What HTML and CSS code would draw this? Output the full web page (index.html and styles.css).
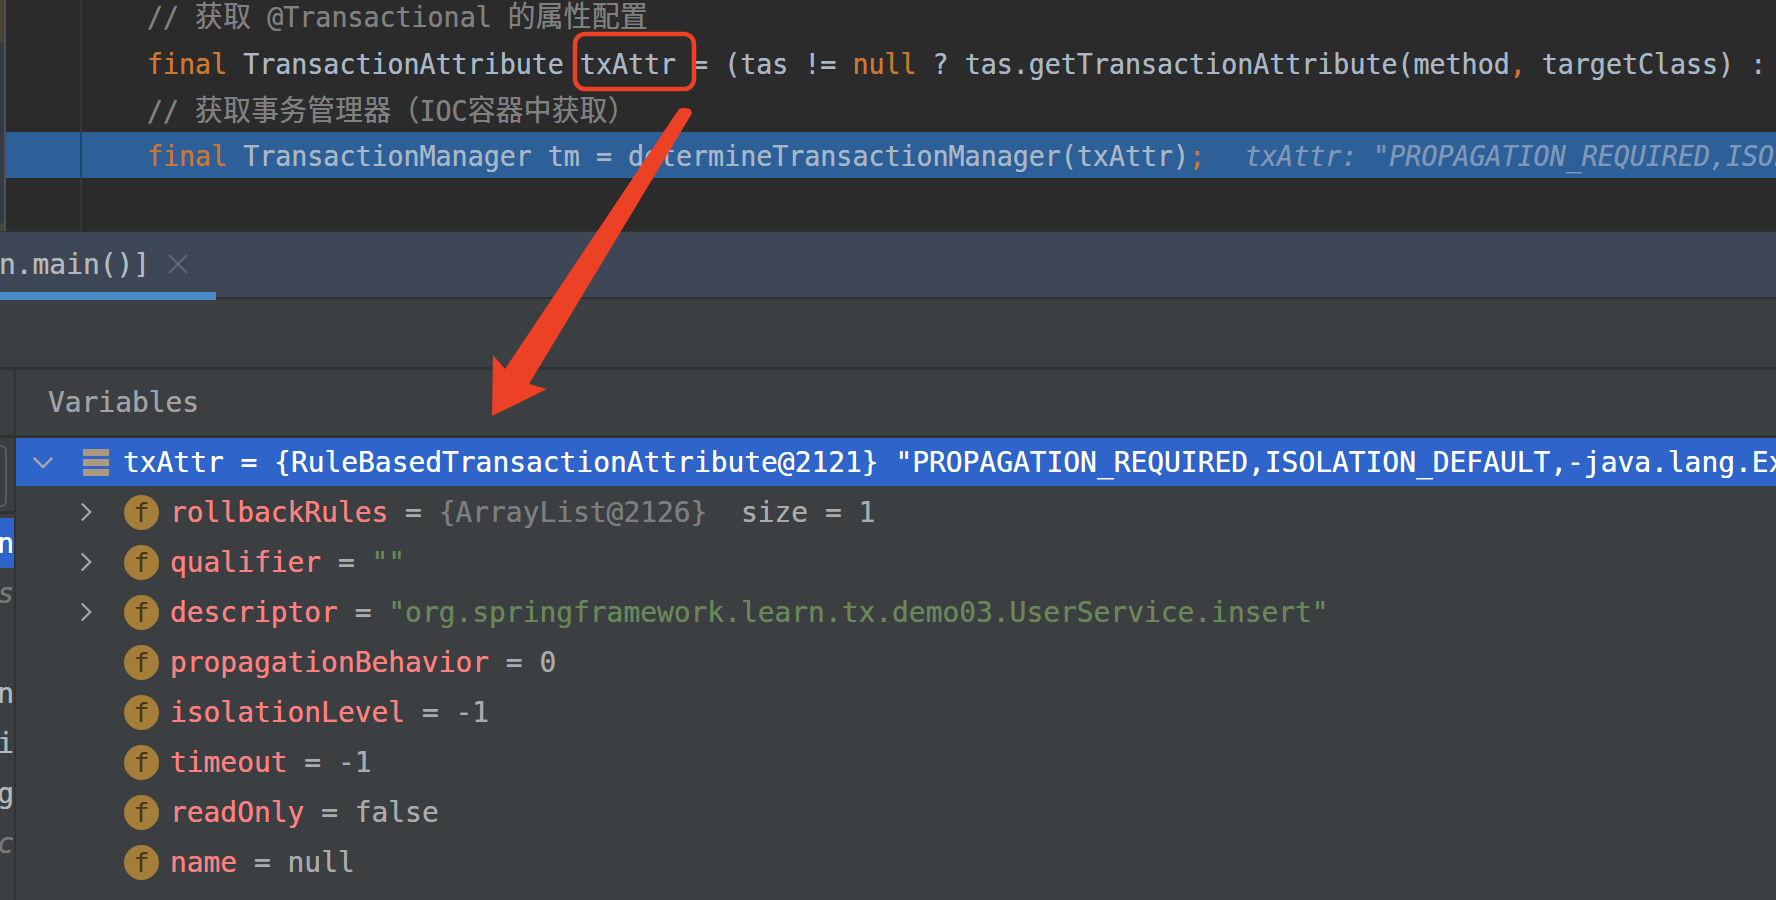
FILE: index.html
```html
<!DOCTYPE html>
<html lang="zh">
<head>
<meta charset="utf-8">
<title>Debugger</title>
<link rel="stylesheet" href="styles.css">
</head>
<body>
<section class="editor">
  <div class="edge"><i class="edge-top"></i><i class="edge-bottom"></i></div>
  <div class="code-wrap">
    <div class="line"><div class="gutter"></div><div class="code"><span class="cm">// <span class="cjk">获取</span> @Transactional <span class="cjk">的属性配置</span></span></div></div>
    <div class="line"><div class="gutter"></div><div class="code"><span class="kw">final</span> TransactionAttribute txAttr = (tas != <span class="kw">null</span> ? tas.getTransactionAttribute(method<span class="kw">,</span> targetClass) : <span class="kw">null</span>);</div></div>
    <div class="line"><div class="gutter"></div><div class="code"><span class="cm">// <span class="cjk">获取事务管理器（</span>IOC<span class="cjk">容器中获取）</span></span></div></div>
    <div class="line current"><div class="gutter"></div><div class="code"><span class="kw">final</span> TransactionManager tm = determineTransactionManager(txAttr)<span class="kw">;</span><span class="hint">txAttr: "PROPAGATION_REQUIRED,ISOLATION_DEFAULT,-java.lang.Exception"</span></div></div>
    <div class="line"><div class="gutter"></div></div>
    <div class="gutter-rest"></div>
  </div>
</section>

<header class="tabbar">
  <div class="tab"><span class="tab-label">n.main()]</span>
    <svg class="tab-close" viewBox="0 0 20 20" aria-hidden="true"><path d="M1 1 19 19M19 1 1 19"/></svg>
  </div>
</header>
<div class="toolbar"></div>

<section class="debug">
  <aside class="frames">
    <div class="frames-head"></div>
    <div class="combo-wrap"><div class="combo"></div></div>
    <div class="frame active"><span>en</span></div>
    <div class="frame dim ital"><span>s</span></div>
    <div class="frame"><span></span></div>
    <div class="frame"><span>n</span></div>
    <div class="frame"><span>ri</span></div>
    <div class="frame"><span>g</span></div>
    <div class="frame dim ital"><span>vc</span></div>
  </aside>
  <main class="vars">
    <div class="vars-head">Variables</div>
    <div class="row selected">
      <span class="twisty"><svg viewBox="0 0 24 14" aria-hidden="true"><path d="M2 2 12 12 22 2"/></svg></span>
      <span class="list-icon"><i></i><i></i><i></i></span>
      <span class="text">txAttr = {RuleBasedTransactionAttribute@2121} "PROPAGATION_REQUIRED,ISOLATION_DEFAULT,-java.lang.Exception"</span>
    </div>
    <div class="row"><span class="twisty closed"><svg viewBox="0 0 14 24" aria-hidden="true"><path d="M2 2 12 12 2 22"/></svg></span><span class="f">f</span><span class="text"><span class="nm">rollbackRules</span> = <span class="ref">{ArrayList@2126}</span>  size = 1</span></div>
    <div class="row"><span class="twisty closed"><svg viewBox="0 0 14 24" aria-hidden="true"><path d="M2 2 12 12 2 22"/></svg></span><span class="f">f</span><span class="text"><span class="nm">qualifier</span> = <span class="str">""</span></span></div>
    <div class="row"><span class="twisty closed"><svg viewBox="0 0 14 24" aria-hidden="true"><path d="M2 2 12 12 2 22"/></svg></span><span class="f">f</span><span class="text"><span class="nm">descriptor</span> = <span class="str">"org.springframework.learn.tx.demo03.UserService.insert"</span></span></div>
    <div class="row"><span class="twisty"></span><span class="f">f</span><span class="text"><span class="nm">propagationBehavior</span> = 0</span></div>
    <div class="row"><span class="twisty"></span><span class="f">f</span><span class="text"><span class="nm">isolationLevel</span> = -1</span></div>
    <div class="row"><span class="twisty"></span><span class="f">f</span><span class="text"><span class="nm">timeout</span> = -1</span></div>
    <div class="row"><span class="twisty"></span><span class="f">f</span><span class="text"><span class="nm">readOnly</span> = false</span></div>
    <div class="row"><span class="twisty"></span><span class="f">f</span><span class="text"><span class="nm">name</span> = null</span></div>
  </main>
</section>

<svg class="annotation" viewBox="0 0 1776 900" aria-hidden="true">
  <rect class="mark-box" x="575" y="34" width="119" height="55" rx="10"/>
  <path class="mark-arrow" d="M679 109Q684 107 690 109Q693 112 691 115L529 384 547 389 492 416 493 355 505 369Z"/>
</svg>
</body>
</html>
```
FILE: styles.css
```css
* { box-sizing: border-box; }
html, body { margin: 0; height: 900px; overflow: hidden; }
body {
  width: 1776px;
  background: #3c3f41;
  font-family: "DejaVu Sans Mono", "Noto Sans CJK SC", monospace;
  font-size: 27.9px;
  color: #a9b7c6;
  text-shadow: 0 0 .6px currentColor;
  display: flex;
  flex-direction: column;
}

/* editor */
.editor {
  height: 232px;
  flex: none;
  display: flex;
  background: #2b2b2b;
  border-bottom: 1px solid #323232;
  overflow: hidden;
}
.edge {
  width: 6px;
  flex: none;
  background: #353b44;
  border-right: 2px solid #4e5152;
  display: flex;
  flex-direction: column;
  justify-content: space-between;
}
.edge-top { height: 42px; background: #4a4536; }
.edge-bottom { height: 8px; background: #3f4a3a; }
.code-wrap {
  flex: 1;
  display: flex;
  flex-direction: column;
  margin-top: -6px;
  min-width: 0;
}
.line {
  height: 46px;
  flex: none;
  display: flex;
  align-items: center;
  white-space: pre;
}
.gutter {
  width: 76px;
  height: 100%;
  flex: none;
  border-right: 2px solid #373737;
}
.gutter-rest {
  flex: 1;
  width: 76px;
  border-right: 2px solid #373737;
}
.code {
  margin-left: 65px;
  padding-top: 4px;
  font-size: 28px;
  transform: scaleX(.951);
  transform-origin: 0 50%;
  line-height: 46px;
}
.line:first-child .code { padding-top: 1px; }
.current { background: #2d5f99; }
.current .gutter { border-right-color: #24466e; }
.kw { color: #cc7832; }
.cm { color: #808080; }
.cjk { font-size: 29px; letter-spacing: .5px; }
.hint {
  color: #7f97b8;
  font-style: italic;
  margin-left: 42px;
}

/* tab strip */
.tabbar {
  height: 67px;
  flex: none;
  background: #3c4654;
  border-bottom: 2px solid #323232;
}
.tab {
  width: 216px;
  height: 68px;
  display: flex;
  align-items: center;
  padding-top: 4px;
  border-bottom: 8px solid #4a88c7;
  color: #b4b8bb;
}
.tab-label { margin-left: -1px; }
.tab-close {
  width: 20px;
  height: 20px;
  margin-left: 18px;
  fill: none;
  stroke: #5d6a78;
  stroke-width: 2;
}

.toolbar { height: 71px; flex: none; border-bottom: 3px solid #323232; }

/* debugger */
.debug { flex: 1; display: flex; min-height: 0; }
.frames {
  width: 16px;
  flex: none;
  border-right: 2px solid #323232;
  overflow: hidden;
  color: #b4b8bb;
}
.frames-head { height: 68px; border-bottom: 3px solid #323232; }
.combo-wrap {
  height: 76px;
  padding-top: 7px;
  border-bottom: 3px solid #323232;
  margin-bottom: 4px;
}
.combo {
  width: 7px;
  height: 62px;
  border: 2px solid #5a5d5f;
  border-left: 0;
  border-radius: 0 6px 6px 0;
}
.frame {
  height: 50px;
  display: flex;
  justify-content: flex-end;
  align-items: center;
  white-space: nowrap;
}
.frame.active { background: #2f65ca; color: #fff; }
.frame.dim { color: #777a7c; }
.frame.ital { font-style: italic; }

.vars { flex: 1; min-width: 0; overflow: hidden; }
.vars-head {
  height: 68px;
  border-bottom: 3px solid #323232;
  padding-left: 32px;
  display: flex;
  align-items: center;
  color: #a0a3a5;
  line-height: 1;
}
.row {
  height: 50px;
  display: flex;
  align-items: center;
  white-space: pre;
  color: #a9abad;
}
.selected {
  height: 48px;
  margin-bottom: 1px;
  background: #2f65ca;
  color: #fff;
}
.twisty {
  width: 108px;
  flex: none;
  display: flex;
  align-items: center;
  justify-content: flex-start;
  padding-left: 16px;
}
.twisty svg {
  width: 22px;
  height: 13px;
  fill: none;
  stroke: #a7a9ab;
  stroke-width: 2.5;
}
.twisty.closed { padding-left: 64px; }
.twisty.closed svg { width: 12px; height: 22px; }
.selected .twisty { width: 67px; }
.list-icon {
  width: 41px;
  height: 27px;
  flex: none;
  display: flex;
  flex-direction: column;
  justify-content: space-between;
}
.list-icon i { display: block; width: 26px; height: 7px; background: #ab9a80; }
.f {
  width: 35px;
  height: 35px;
  flex: none;
  border-radius: 50%;
  background: #a57e3a;
  color: #4a3516;
  display: flex;
  align-items: center;
  justify-content: center;
  font-size: 27px;
  line-height: 1;
  margin-right: 11px;
  text-shadow: none;
}
.text { flex: none; }
.selected .text { margin-left: -1px; }
.nm { color: #ff8080; }
.ref { color: #7c7f81; }
.str { color: #6a8759; }

/* red markup drawn over the screenshot */
.annotation {
  position: absolute;
  left: 0;
  top: 0;
  width: 1776px;
  height: 900px;
  pointer-events: none;
}
.mark-box { fill: none; stroke: #ec4125; stroke-width: 4.5; }
.mark-arrow { fill: #ec4125; }
```
